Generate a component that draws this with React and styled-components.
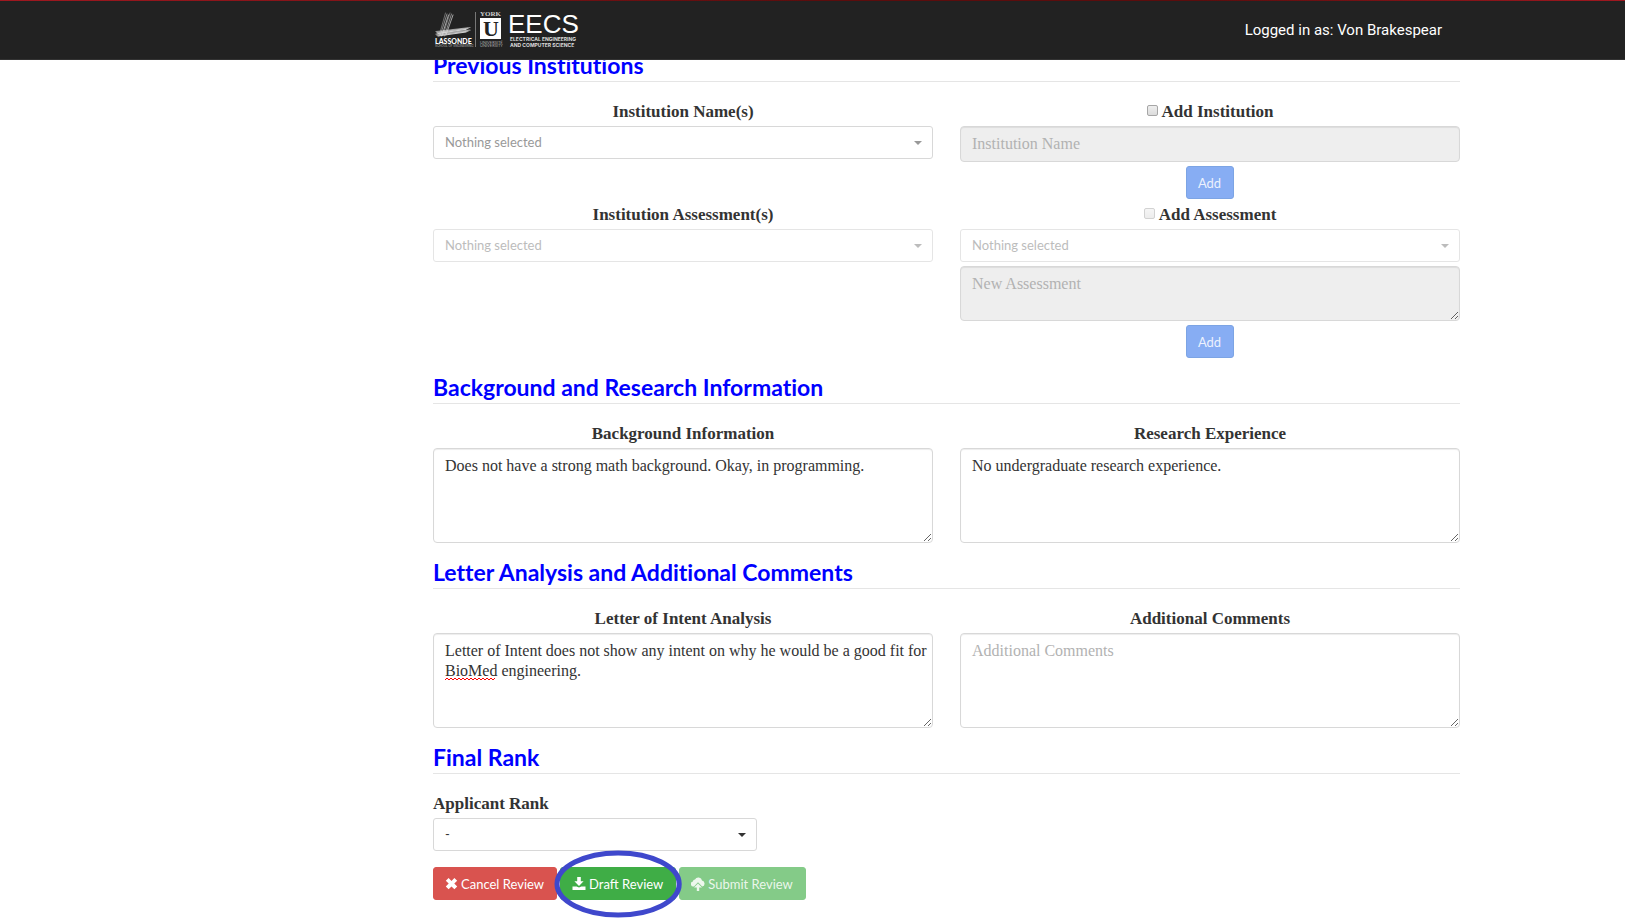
import React from 'react';
import styled, { createGlobalStyle } from 'styled-components';

const SANS = 'Lato, "Liberation Sans", sans-serif';
const SERIF = '"Liberation Serif", "Times New Roman", serif';

const GlobalStyle = createGlobalStyle`
  *, *::before, *::after { box-sizing: border-box; }
  body {
    margin: 0;
    background: #fff;
    color: #333;
    font: 16px/20px ${SERIF};
    font-variant-ligatures: none;
  }
  button, input, select, textarea { font: inherit; color: inherit; margin: 0; }
`;

const Header = styled.header`
  position: fixed;
  top: 0;
  left: 0;
  right: 0;
  z-index: 10;
  display: flex;
  align-items: center;
  justify-content: space-between;
  height: 60px;
  padding: 0 183px 0 434px;
  background: linear-gradient(90deg, #a01820, #5c0d0d 50% 74%, #a01820) top / 100% 1px no-repeat #222;
  border-bottom: 1px solid #333;
`;

const LogoLink = styled.a`
  display: block;
  height: 40px;
`;

const UserName = styled.span`
  font: 15px/20px Roboto, ${SANS};
  color: #fff;
`;

const Main = styled.main`
  display: flex;
  flex-direction: column;
  gap: 13px;
  padding: 49px 165px 20px 433px;
`;

const Title = styled.h2`
  margin: 0 0 19px;
  border-bottom: 1px solid #e5e5e5;
  font: bold 23px/32px ${SANS};
  font-variant-ligatures: none;
  color: #00f;
`;

const Columns = styled.div`
  display: grid;
  grid-template-columns: 1fr 1fr;
  column-gap: 27px;
  & + & { margin-top: 5px; }
`;

const Field = styled.div`
  display: flex;
  flex-direction: column;
  align-items: ${p => (p.$start ? 'flex-start' : 'center')};
  gap: 4px;
`;

const Caption = styled.div`
  display: flex;
  align-items: center;
  gap: 4px;
  height: 21px;
`;

const Label = styled.label`
  font-weight: bold;
  font-size: 17px;
  line-height: 22px;
`;

const Checkbox = styled.input.attrs({ type: 'checkbox' })`
  appearance: none;
  width: 11px;
  height: 11px;
  margin-bottom: 2px;
  border: 1px solid #a6a6a6;
  border-radius: 2px;
  background: linear-gradient(#eee, #dcdcdc);
  &:disabled { opacity: 0.5; }
`;

const SelectBox = styled.div`
  position: relative;
  width: ${p => p.$width || '100%'};
  color: ${p => (p.$chosen ? '#333' : '#999')};
  opacity: ${p => (p.$muted ? 0.65 : 1)};
`;

const SelectInput = styled.select`
  display: block;
  appearance: none;
  width: 100%;
  height: 33px;
  padding: 0 28px 2px 11px;
  border: 1px solid #d8d8d8;
  border-radius: 3px;
  background: #fff;
  font: 13px/20px ${SANS};
  &:disabled { opacity: 1; }
`;

const Caret = styled.svg`
  position: absolute;
  right: 11px;
  top: 15px;
  pointer-events: none;
`;

const inset = 'inset 0 1px 1px rgba(0, 0, 0, 0.075)';

const TextInput = styled.input`
  width: 100%;
  height: 36px;
  padding: 0 11px;
  border: 1px solid #d8d8d8;
  border-radius: 4px;
  background: #fff;
  box-shadow: ${inset};
  &:disabled { background: #eee; }
  &::placeholder { color: #b2b2b2; }
`;

const TextBox = styled.div`
  position: relative;
  width: 100%;
`;

const TextArea = styled.textarea`
  display: block;
  width: 100%;
  height: ${p => (p.$short ? '55px' : '95px')};
  padding: 7px 4px 6px 11px;
  border: 1px solid #d8d8d8;
  border-radius: 4px;
  background: #fff;
  box-shadow: ${inset};
  resize: vertical;
  overflow: auto;
  &:disabled { background: #eee; }
  &::placeholder { color: #b2b2b2; }
`;

const Squiggle = styled.svg`
  position: absolute;
  left: 12px;
  top: 44px;
  pointer-events: none;
`;

const tones = {
  primary: ['#87adf3', '#7ca4e4'],
  danger: ['#d9534f', '#d9534f'],
  success: ['#3fad46', '#3fad46'],
  successMuted: ['#84cb88', '#84cb88'],
};

const Button = styled.button`
  display: flex;
  align-items: center;
  gap: 3px;
  height: 33px;
  padding: 0 12px 0 11px;
  border: 1px solid ${p => tones[p.$tone][1]};
  border-radius: 3px;
  background: ${p => tones[p.$tone][0]};
  color: ${p => (p.disabled ? 'rgba(255, 255, 255, 0.85)' : '#fff')};
  font: 13px/20px ${SANS};
`;

const Actions = styled.div`
  display: flex;
  gap: 3px;
  margin-top: 16px;
`;

const Highlighted = styled.div`
  position: relative;
`;

const Ring = styled.svg`
  position: absolute;
  left: -5px;
  top: -16px;
  width: calc(100% + 11px);
  height: 67px;
  overflow: visible;
  pointer-events: none;
`;

function Logo() {
  const strokes = [0, 1, 2, 3, 4, 5];
  return (
    <svg width="146" height="40" viewBox="0 0 146 40" role="img" aria-label="Lassonde York U EECS">
      <g stroke="#ddd" strokeLinecap="round" fill="none">
        {strokes.map(i => (
          <path key={i} d={`M${11.5 + i * 1.5} ${3 + (i % 3)}L${5 + i * 1.4} ${26 - (i % 2)}`} strokeWidth="1" opacity={0.4 + (i % 3) * 0.15} />
        ))}
        {strokes.map(i => (
          <path key={i} d={`M${2 + (i % 3)} ${21.5 + i * 0.9}L${36 - (i % 3) * 2} ${17.5 + i * 0.9}`} strokeWidth="1.2" opacity={0.6 + (i % 3) * 0.15} />
        ))}
      </g>
      <text x="1" y="34" fontFamily="Lato, sans-serif" fontWeight="900" fontSize="7" fill="#fff">LASSONDE</text>
      <text x="1" y="37" fontFamily="Inter, sans-serif" fontSize="3" fill="#bbb">SCHOOL OF ENGINEERING</text>
      <path d="M41.5 2V37" stroke="#777" strokeWidth="1" />
      <text x="46" y="6" fontFamily="Liberation Serif, serif" fontWeight="bold" fontSize="7" fill="#ccc">YORK</text>
      <rect x="46" y="8" width="21" height="21" fill="#fff" />
      <text x="57" y="26" textAnchor="middle" fontFamily="Liberation Serif, serif" fontWeight="bold" fontSize="22" fill="#222">U</text>
      <text x="46" y="34" fontFamily="Lato, sans-serif" fontSize="4" fill="#aaa">UNIVERSITÉ</text>
      <text x="46" y="37" fontFamily="Lato, sans-serif" fontSize="4" fill="#aaa">UNIVERSITY</text>
      <text x="74" y="23" fontFamily="Liberation Sans, sans-serif" fontSize="26" fill="#fff">EECS</text>
      <text x="76" y="31" fontFamily="Inter, sans-serif" fontWeight="bold" fontSize="5" fill="#ddd">ELECTRICAL ENGINEERING</text>
      <text x="76" y="37" fontFamily="Inter, sans-serif" fontWeight="bold" fontSize="5" fill="#ddd">AND COMPUTER SCIENCE</text>
    </svg>
  );
}

const RemoveIcon = () => (
  <svg width="13" height="14" viewBox="0 0 13 14" aria-hidden="true">
    <path d="M3.6 1 6.5 3.9 9.4 1 12.2 3.8 9.3 6.6 12.2 9.5 9.4 12.3 6.5 9.4 3.6 12.3.8 9.5 3.7 6.6.8 3.8Z" fill="currentColor" />
  </svg>
);

const DownloadIcon = () => (
  <svg width="14" height="14" viewBox="0 0 14 14" aria-hidden="true">
    <path d="M5.2 0H8.8V4.2H11.6L7 8.9 2.4 4.2H5.2ZM.5 9.5H4.6L7 10.4 9.4 9.5H13.5V13H.5Z" fill="currentColor" />
  </svg>
);

const CloudUploadIcon = () => (
  <svg width="14" height="14" viewBox="0 0 14 14" aria-hidden="true">
    <path d="M3 9.5A2.6 2.6 0 0 1 1.9 4.4 2.1 2.1 0 0 1 4 2.5 3.7 3.7 0 0 1 11 3.6 3 3 0 0 1 11.2 9.5L7 5.2Z" fill="currentColor" />
    <path d="M7 6.6 11 10.6H8.2V14H5.8V10.6H3Z" fill="currentColor" />
  </svg>
);

function Select({ id, text, disabled, chosen, width, label }) {
  return (
    <SelectBox $width={width} $muted={disabled} $chosen={chosen}>
      <SelectInput id={id} disabled={disabled} aria-label={label}>
        <option>{text}</option>
      </SelectInput>
      <Caret width="8" height="4" viewBox="0 0 8 4" aria-hidden="true">
        <path d="M0 0H8L4 4Z" fill="currentColor" />
      </Caret>
    </SelectBox>
  );
}

function NoteField({ id, label, value, placeholder, children }) {
  return (
    <Field>
      <Caption><Label htmlFor={id}>{label}</Label></Caption>
      <TextBox>
        <TextArea id={id} defaultValue={value} placeholder={placeholder} spellCheck={false} />
        {children}
      </TextBox>
    </Field>
  );
}

export default function App() {
  return (
    <>
      <GlobalStyle />
      <Header>
        <LogoLink href="#"><Logo /></LogoLink>
        <UserName>Logged in as: Von Brakespear</UserName>
      </Header>
      <Main>
        <section>
          <Title>Previous Institutions</Title>
          <Columns>
            <Field>
              <Caption><Label htmlFor="names">Institution Name(s)</Label></Caption>
              <Select id="names" text="Nothing selected" />
            </Field>
            <Field>
              <Caption>
                <Checkbox id="add-institution" />
                <Label htmlFor="add-institution">Add Institution</Label>
              </Caption>
              <TextInput placeholder="Institution Name" aria-label="Institution Name" disabled />
              <Button $tone="primary" disabled>Add</Button>
            </Field>
          </Columns>
          <Columns>
            <Field>
              <Caption><Label htmlFor="assessments">Institution Assessment(s)</Label></Caption>
              <Select id="assessments" text="Nothing selected" disabled />
            </Field>
            <Field>
              <Caption>
                <Checkbox id="add-assessment" disabled />
                <Label htmlFor="add-assessment">Add Assessment</Label>
              </Caption>
              <Select text="Nothing selected" label="Institution" disabled />
              <TextArea $short placeholder="New Assessment" aria-label="New Assessment" disabled />
              <Button $tone="primary" disabled>Add</Button>
            </Field>
          </Columns>
        </section>

        <section>
          <Title>Background and Research Information</Title>
          <Columns>
            <NoteField id="background" label="Background Information" value="Does not have a strong math background. Okay, in programming." />
            <NoteField id="research" label="Research Experience" value="No undergraduate research experience." />
          </Columns>
        </section>

        <section>
          <Title>Letter Analysis and Additional Comments</Title>
          <Columns>
            <NoteField
              id="letter"
              label="Letter of Intent Analysis"
              value="Letter of Intent does not show any intent on why he would be a good fit for BioMed engineering."
            >
              <Squiggle width="50" height="4" viewBox="0 0 50 4" aria-hidden="true">
                <path
                  d={'M0 3' + Array.from({ length: 25 }, (_, i) => `L${i * 2 + 2} ${i % 2 ? 3 : 1}`).join('')}
                  fill="none"
                  stroke="#f00"
                />
              </Squiggle>
            </NoteField>
            <NoteField id="comments" label="Additional Comments" placeholder="Additional Comments" />
          </Columns>
        </section>

        <section>
          <Title>Final Rank</Title>
          <Field $start>
            <Caption><Label htmlFor="rank">Applicant Rank</Label></Caption>
            <Select id="rank" text="-" width="324px" chosen />
          </Field>
          <Actions>
            <Button $tone="danger"><RemoveIcon />Cancel Review</Button>
            <Highlighted>
              <Button $tone="success"><DownloadIcon />Draft Review</Button>
              <Ring viewBox="0 0 125 67" preserveAspectRatio="none" aria-hidden="true">
                <ellipse cx="62" cy="33" rx="60" ry="31" fill="none" stroke="#3f48cc" strokeWidth="5" />
              </Ring>
            </Highlighted>
            <Button $tone="successMuted" disabled><CloudUploadIcon />Submit Review</Button>
          </Actions>
        </section>
      </Main>
    </>
  );
}
